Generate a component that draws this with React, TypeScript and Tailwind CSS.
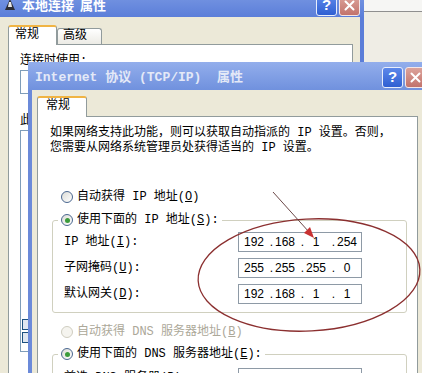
import { Fragment, ReactNode } from 'react';

const ui = "font-['Liberation_Mono','Noto_Sans_CJK_SC',monospace]";

const Radio = ({ checked, disabled }: { checked?: boolean; disabled?: boolean }) => (
  <span
    className={`inline-flex shrink-0 items-center justify-center w-[12px] h-[12px] rounded-full border ${
      disabled ? 'border-[#cfcdc0] bg-[#f5f4ef]' : 'border-[#4a6790] bg-linear-to-br from-[#dcdcd6] to-white'
    }`}
  >
    {checked && <span className="w-[5px] h-[5px] rounded-full bg-[#3b9b3b]" />}
  </span>
);

const TitleButtons = () => (
  <div className="ml-auto flex gap-[2px]">
    <div className="w-[21px] h-[21px] rounded-[3px] border border-[#e8eefc] bg-linear-to-b from-[#5d88ea] to-[#2f5fd2] flex items-center justify-center text-white text-[15px] font-bold font-['Liberation_Sans',sans-serif]">
      ?
    </div>
    <div className="w-[21px] h-[21px] rounded-[3px] border border-[#f4e6e6] bg-linear-to-b from-[#dca39b] to-[#c2736c] flex items-center justify-center">
      <svg width="11" height="11" viewBox="0 0 11 11">
        <path d="M1.5 1.5 L9.5 9.5 M9.5 1.5 L1.5 9.5" stroke="white" strokeWidth="2" strokeLinecap="round" />
      </svg>
    </div>
  </div>
);

const IpBox = ({ parts }: { parts: string[] }) => (
  <div className="w-[124px] h-[20px] shrink-0 border border-[#8e9aa6] bg-white flex items-center pl-[3px] font-['Liberation_Sans',sans-serif] text-[12px] text-black">
    {parts.map((p, i) => (
      <Fragment key={i}>
        {i > 0 && <span className="w-[7px] text-right">.</span>}
        <span className="w-[24px] text-center">{p}</span>
      </Fragment>
    ))}
  </div>
);

const Row = ({ label, parts }: { label: ReactNode; parts: string[] }) => (
  <div className="flex items-center h-[20px]">
    <span className={`${ui} w-[174px] text-[12px] leading-[14px] text-black whitespace-pre`}>{label}</span>
    <IpBox parts={parts} />
  </div>
);

export default function App() {
  return (
    <div className="relative w-[422px] h-[373px] overflow-hidden bg-[#efede5]">
      {/* window further back, right edge */}
      <div className="absolute top-0 left-[364px] right-0 h-[12px] bg-[#f6f6f4] border-b border-[#8f8f8f]" />

      {/* 本地连接 属性 */}
      <div className="absolute left-0 top-[-11px] w-[364px] h-[420px] flex flex-col">
        <div className="h-[28px] flex items-center pt-[4px] pl-[3px] pr-[4px] bg-linear-to-b from-[#7d9be4] to-[#5b7ed9]">
          <svg width="15" height="14" viewBox="0 0 15 14" className="mr-[4px]">
            <path d="M7 1 L12 12 L2 12 Z" fill="#2d2d35" />
            <path d="M6 4 L8 4 L9 9 L5 9 Z" fill="#e8e8e8" />
          </svg>
          <span className="text-[13px] font-bold text-white font-['Noto_Sans_CJK_SC',sans-serif] whitespace-pre">本地连接  属性</span>
          <TitleButtons />
        </div>
        <div className="flex-1 bg-[#ece9d8] border-r-4 border-[#5b7dd8] pl-[8px] pr-[7px] pt-[8px] flex flex-col">
          <div className={`${ui} flex items-end text-[12px] text-black`}>
            <div className="relative z-10 -mb-px h-[20px] w-[49px] bg-white border-x border-[#919b9c] border-t-2 border-t-[#f0b444] rounded-t-[3px] pl-[6px] leading-[16px]">
              常规
            </div>
            <div className="h-[16px] w-[45px] bg-linear-to-b from-white to-[#ecebe5] border border-b-0 border-[#919b9c] rounded-t-[3px] pl-[5px] leading-[15px]">
              高级
            </div>
          </div>
          <div className={`${ui} flex-1 bg-white border border-[#919b9c] pl-[11px] pt-[9px] text-[12px] leading-[14px] text-black`}>
            <p>连接时使用:</p>
            <div className="mt-[2px] h-[24px] w-[300px] border border-[#7f9db9]" />
            <p className="mt-[20px]">此连接使用下列项目(O):</p>
            <div className="mt-[2px] h-[222px] w-[300px] border border-[#7f9db9] flex flex-col justify-end gap-[2px] pl-[1px] pb-[8px]">
              <span className="w-[11px] h-[11px] border border-[#1c5180] bg-[#dfe6f0]" />
              <span className="w-[11px] h-[11px] border border-[#1c5180] bg-[#dfe6f0]" />
            </div>
          </div>
        </div>
      </div>

      {/* Internet 协议 (TCP/IP) 属性 */}
      <div className="absolute left-[28px] top-[62px] w-[400px] h-[340px] flex flex-col">
        <div className="h-[28px] flex items-center pt-[3px] pl-[7px] pr-[2px] bg-linear-to-b from-[#93aeec] to-[#7091de]">
          <span className="text-[13px] font-bold text-[#e4e9f7] font-['Liberation_Mono','Noto_Sans_CJK_SC',monospace] whitespace-pre">
            Internet 协议 (TCP/IP)  属性
          </span>
          <TitleButtons />
        </div>
        <div className="flex-1 bg-[#ece9d8] border-x-4 border-[#6b8ad9] pl-[5px] pr-[6px] pt-[6px] flex flex-col">
          <div className={`${ui} relative z-10 -mb-px h-[21px] w-[50px] bg-white border-x border-[#919b9c] border-t-2 border-t-[#f0b444] rounded-t-[3px] pl-[8px] text-[12px] leading-[17px] text-black`}>
            常规
          </div>
          <div className={`${ui} flex-1 bg-white border border-[#919b9c] pl-[12px] pt-[9px] text-[12px] text-black`}>
            <p className="leading-[15px] whitespace-nowrap">
              如果网络支持此功能，则可以获取自动指派的 IP 设置。否则，
              <br />
              您需要从网络系统管理员处获得适当的 IP 设置。
            </p>

            <div className="mt-[34px] pl-[11px] h-[14px] flex items-center gap-[4px] leading-[14px] whitespace-pre">
              <Radio />
              <span>自动获得 IP 地址(<u>O</u>)</span>
            </div>

            <fieldset className="mt-[9px] ml-[2px] w-[355px] border border-[#d0d0bf] rounded-[3px] pl-[5px] pb-[8px]">
              <legend className="px-[3px]">
                <span className="h-[14px] flex items-center gap-[4px] leading-[14px] whitespace-pre">
                  <Radio checked />
                  <span>使用下面的 IP 地址(<u>S</u>):</span>
                </span>
              </legend>
              <div className="pt-[5px] pl-[6px] flex flex-col gap-[6px]">
                <Row label={<>IP 地址(<u>I</u>):</>} parts={['192', '168', '1', '254']} />
                <Row label={<>子网掩码(<u>U</u>):</>} parts={['255', '255', '255', '0']} />
                <Row label={<>默认网关(<u>D</u>):</>} parts={['192', '168', '1', '1']} />
              </div>
            </fieldset>

            <div className="mt-[12px] pl-[11px] h-[14px] flex items-center gap-[4px] leading-[14px] whitespace-pre text-[#aca899]">
              <Radio disabled />
              <span>自动获得 DNS 服务器地址(<u>B</u>)</span>
            </div>

            <fieldset className="mt-[8px] ml-[2px] w-[355px] border border-[#d0d0bf] rounded-[3px] pl-[5px] pb-[8px]">
              <legend className="px-[3px]">
                <span className="h-[14px] flex items-center gap-[4px] leading-[14px] whitespace-pre">
                  <Radio checked />
                  <span>使用下面的 DNS 服务器地址(<u>E</u>):</span>
                </span>
              </legend>
              <div className="pt-[7px] pl-[6px] flex flex-col gap-[6px]">
                <Row label={<>首选 DNS 服务器(<u>P</u>):</>} parts={['192', '168', '1', '1']} />
              </div>
            </fieldset>
          </div>
        </div>
      </div>

      {/* hand-drawn annotation */}
      <svg className="absolute inset-0 pointer-events-none" width="422" height="373" viewBox="0 0 422 373">
        <ellipse cx="309" cy="275" rx="111" ry="56" transform="rotate(-3 309 275)" fill="none" stroke="#8b2f2f" strokeWidth="1.3" />
        <line x1="273" y1="192" x2="309" y2="232" stroke="#6b4848" strokeWidth="1" />
        <polygon points="314,238 304,233 310,227" fill="#c83232" />
      </svg>
    </div>
  );
}
